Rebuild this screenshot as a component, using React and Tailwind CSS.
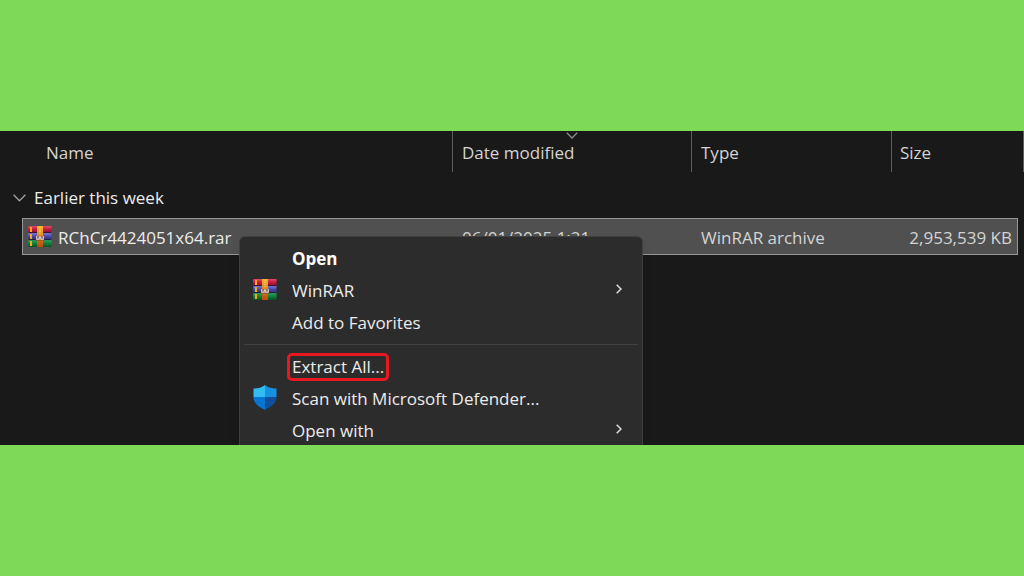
import { useState } from 'react';

const FILES = [
    { name: 'RChCr4424051x64.rar', modified: '06/01/2025 1:21', type: 'WinRAR archive', size: '2,953,539 KB' },
];

const ArchiveIcon = () => (
    <svg viewBox="0 0 24 21" className="h-[21px] w-6 shrink-0" aria-hidden="true">
        <defs>
            <linearGradient id="bookRed" x1="0" y1="0" x2="0" y2="1">
                <stop offset="0" stopColor="#e84a68" />
                <stop offset="0.5" stopColor="#c01a3e" />
                <stop offset="1" stopColor="#7c1030" />
            </linearGradient>
            <linearGradient id="bookBlue" x1="0" y1="0" x2="0" y2="1">
                <stop offset="0" stopColor="#7c7bd8" />
                <stop offset="0.5" stopColor="#4546a6" />
                <stop offset="1" stopColor="#2a2a70" />
            </linearGradient>
            <linearGradient id="bookGreen" x1="0" y1="0" x2="0" y2="1">
                <stop offset="0" stopColor="#2aa35c" />
                <stop offset="0.5" stopColor="#107f3c" />
                <stop offset="1" stopColor="#075024" />
            </linearGradient>
            <linearGradient id="strap" x1="0" y1="0" x2="0" y2="1">
                <stop offset="0" stopColor="#f2b52c" />
                <stop offset="0.5" stopColor="#dc8420" />
                <stop offset="1" stopColor="#b8480c" />
            </linearGradient>
        </defs>
        <path d="M1 0h22.5v7H1L0 6V1z" fill="url(#bookRed)" />
        <path d="M1 7h22.5v7H1L0 13V8z" fill="url(#bookBlue)" />
        <path d="M1 14h22.5v7H1L0 20v-5z" fill="url(#bookGreen)" />
        <path d="M2 1h2v5H2zM2 8h2v5H2zM2 15h2v5H2z" fill="#f5a81c" />
        <path d="M1 6.6h22M1 13.6h22" stroke="#20142c" strokeWidth="0.7" />
        <path d="M9 0h6v21H9z" fill="url(#strap)" />
        <path d="M12 1v8" stroke="#ffe27a" strokeWidth="1" strokeDasharray="1 1" />
        <path d="M9 10v3.200h2V11.500h2v1.700h2V10" fill="none" stroke="#74442c" strokeWidth="2.4" />
        <path d="M8.8 10v3.2h2.4V11h1.6v2.2h2.4V10" fill="none" stroke="#ece4e0" strokeWidth="1.1" />
    </svg>
);

const ShieldIcon = () => (
    <svg viewBox="0 0 24 25" className="h-[25px] w-6 shrink-0" aria-hidden="true">
        <path d="M12 0C9 2.6 5 3.5 0.5 3.5V12H12z" fill="#32bcf2" />
        <path d="M12 0c3 2.6 7 3.5 11.5 3.5V12H12z" fill="#1691e2" />
        <path d="M0.5 12H12v13C6 22 0.5 18.5 0.5 12z" fill="#0776d2" />
        <path d="M23.5 12H12v13c6-3 11.5-6.5 11.5-13z" fill="#114f9c" />
    </svg>
);

const MENU = [
    [
        { label: 'Open', bold: true },
        { label: 'WinRAR', icon: <ArchiveIcon />, submenu: true },
        { label: 'Add to Favorites' },
    ],
    [
        { label: 'Extract All...', marked: true },
        { label: 'Scan with Microsoft Defender...', icon: <ShieldIcon /> },
        { label: 'Open with', submenu: true },
    ],
];

const MenuItem = ({ item }) => (
    <li>
        <button className="flex h-8 w-full items-center pr-5 pl-[13px] text-left hover:bg-[#383838]">
            <span className="flex w-[39px] shrink-0 pb-1">{item.icon}</span>
            <span className={item.bold ? 'relative font-bold text-white' : 'relative'}>
                {item.label}
                {item.marked && <span className="absolute -inset-x-[5px] -inset-y-[2px] rounded-[5px] border-3 border-[#e81820]" />}
            </span>
            {item.submenu && (
                <svg viewBox="0 0 6 10" className="mb-1 ml-auto h-[10px] w-[6px]" fill="none" stroke="#e0e0e0" strokeWidth="1.5" aria-hidden="true">
                    <path d="M0.7 0.7L5 5L0.7 9.3" />
                </svg>
            )}
        </button>
    </li>
);

const ContextMenu = () => (
    <div className="absolute top-[105px] left-[239px] w-[404px] rounded-t-md border border-b-0 border-[#404040] bg-[#2c2c2c] pt-[6px] text-[#ececec] shadow-lg">
        {MENU.map((group, i) => (
            <ul key={i} className={i > 0 ? 'mx-1 mt-[5px] border-t border-[#414141] pt-[6px] *:-mx-1' : ''}>
                {group.map((item) => <MenuItem key={item.label} item={item} />)}
            </ul>
        ))}
    </div>
);

const App = () => {
    const [expanded, setExpanded] = useState(true);

    return (
        <div className="flex min-h-screen flex-col justify-center bg-[#7ed957] font-['Open_Sans','Noto_Sans',sans-serif] text-[17px] leading-6">
            <main className="relative overflow-hidden bg-[#191919] pb-[190px] text-[#d4d4d4]">
                <table className="w-full table-fixed border-separate border-spacing-0 text-left">
                    <colgroup>
                        <col className="w-[22px]" />
                        <col />
                        <col className="w-[239px]" />
                        <col className="w-[200px]" />
                        <col className="w-[127px]" />
                        <col className="w-[6px]" />
                    </colgroup>
                    <thead>
                        <tr className="h-[41px] *:font-normal">
                            <td />
                            <th className="pt-[3px] pl-6">Name</th>
                            <th className="relative border-l border-[#5c5c5c] pt-[3px] pl-[9px]">
                                Date modified
                                <svg viewBox="0 0 12 7" className="absolute top-px left-1/2 h-[7px] w-3 -translate-x-1/2" fill="none" stroke="#8c8c8c" strokeWidth="1.3" aria-hidden="true">
                                    <path d="M0.8 0.8L6 6L11.2 0.8" />
                                </svg>
                            </th>
                            <th className="border-l border-[#5c5c5c] pt-[3px] pl-[9px]">Type</th>
                            <th className="border-l border-[#5c5c5c] pt-[3px] pl-2">Size</th>
                            <td className="border-r border-[#5c5c5c]" />
                        </tr>
                    </thead>
                    <tbody>
                        <tr className="h-[46px]">
                            <td colSpan={6} className="pt-[6px] pl-[13px] text-[#ececec]">
                                <button className="flex items-center gap-2" aria-expanded={expanded} onClick={() => setExpanded(!expanded)}>
                                    <svg viewBox="0 0 13 8" className="h-2 w-[13px]" fill="none" stroke="#a0a0a0" strokeWidth="1.3" aria-hidden="true">
                                        <path d="M0.6 0.8L6.5 6.8L12.4 0.8" />
                                    </svg>
                                    Earlier this week
                                </button>
                            </td>
                        </tr>
                        {expanded && FILES.map((f) => (
                            <tr key={f.name} className="h-[37px]">
                                <td />
                                <td className="border-y border-l border-[#969696] bg-[#505050] pl-[5px] text-[#ececec]">
                                    <span className="flex items-center gap-[6px]">
                                        <ArchiveIcon />
                                        <span className="pt-[3px]">{f.name}</span>
                                    </span>
                                </td>
                                <td className="border-y border-[#969696] bg-[#505050] pt-[3px] pl-[10px]">{f.modified}</td>
                                <td className="border-y border-[#969696] bg-[#505050] pt-[3px] pl-[10px]">{f.type}</td>
                                <td className="border-y border-r border-[#969696] bg-[#505050] pt-[3px] pr-[5px] text-right">{f.size}</td>
                                <td />
                            </tr>
                        ))}
                    </tbody>
                </table>
                <ContextMenu />
            </main>
        </div>
    );
};

export default App;
